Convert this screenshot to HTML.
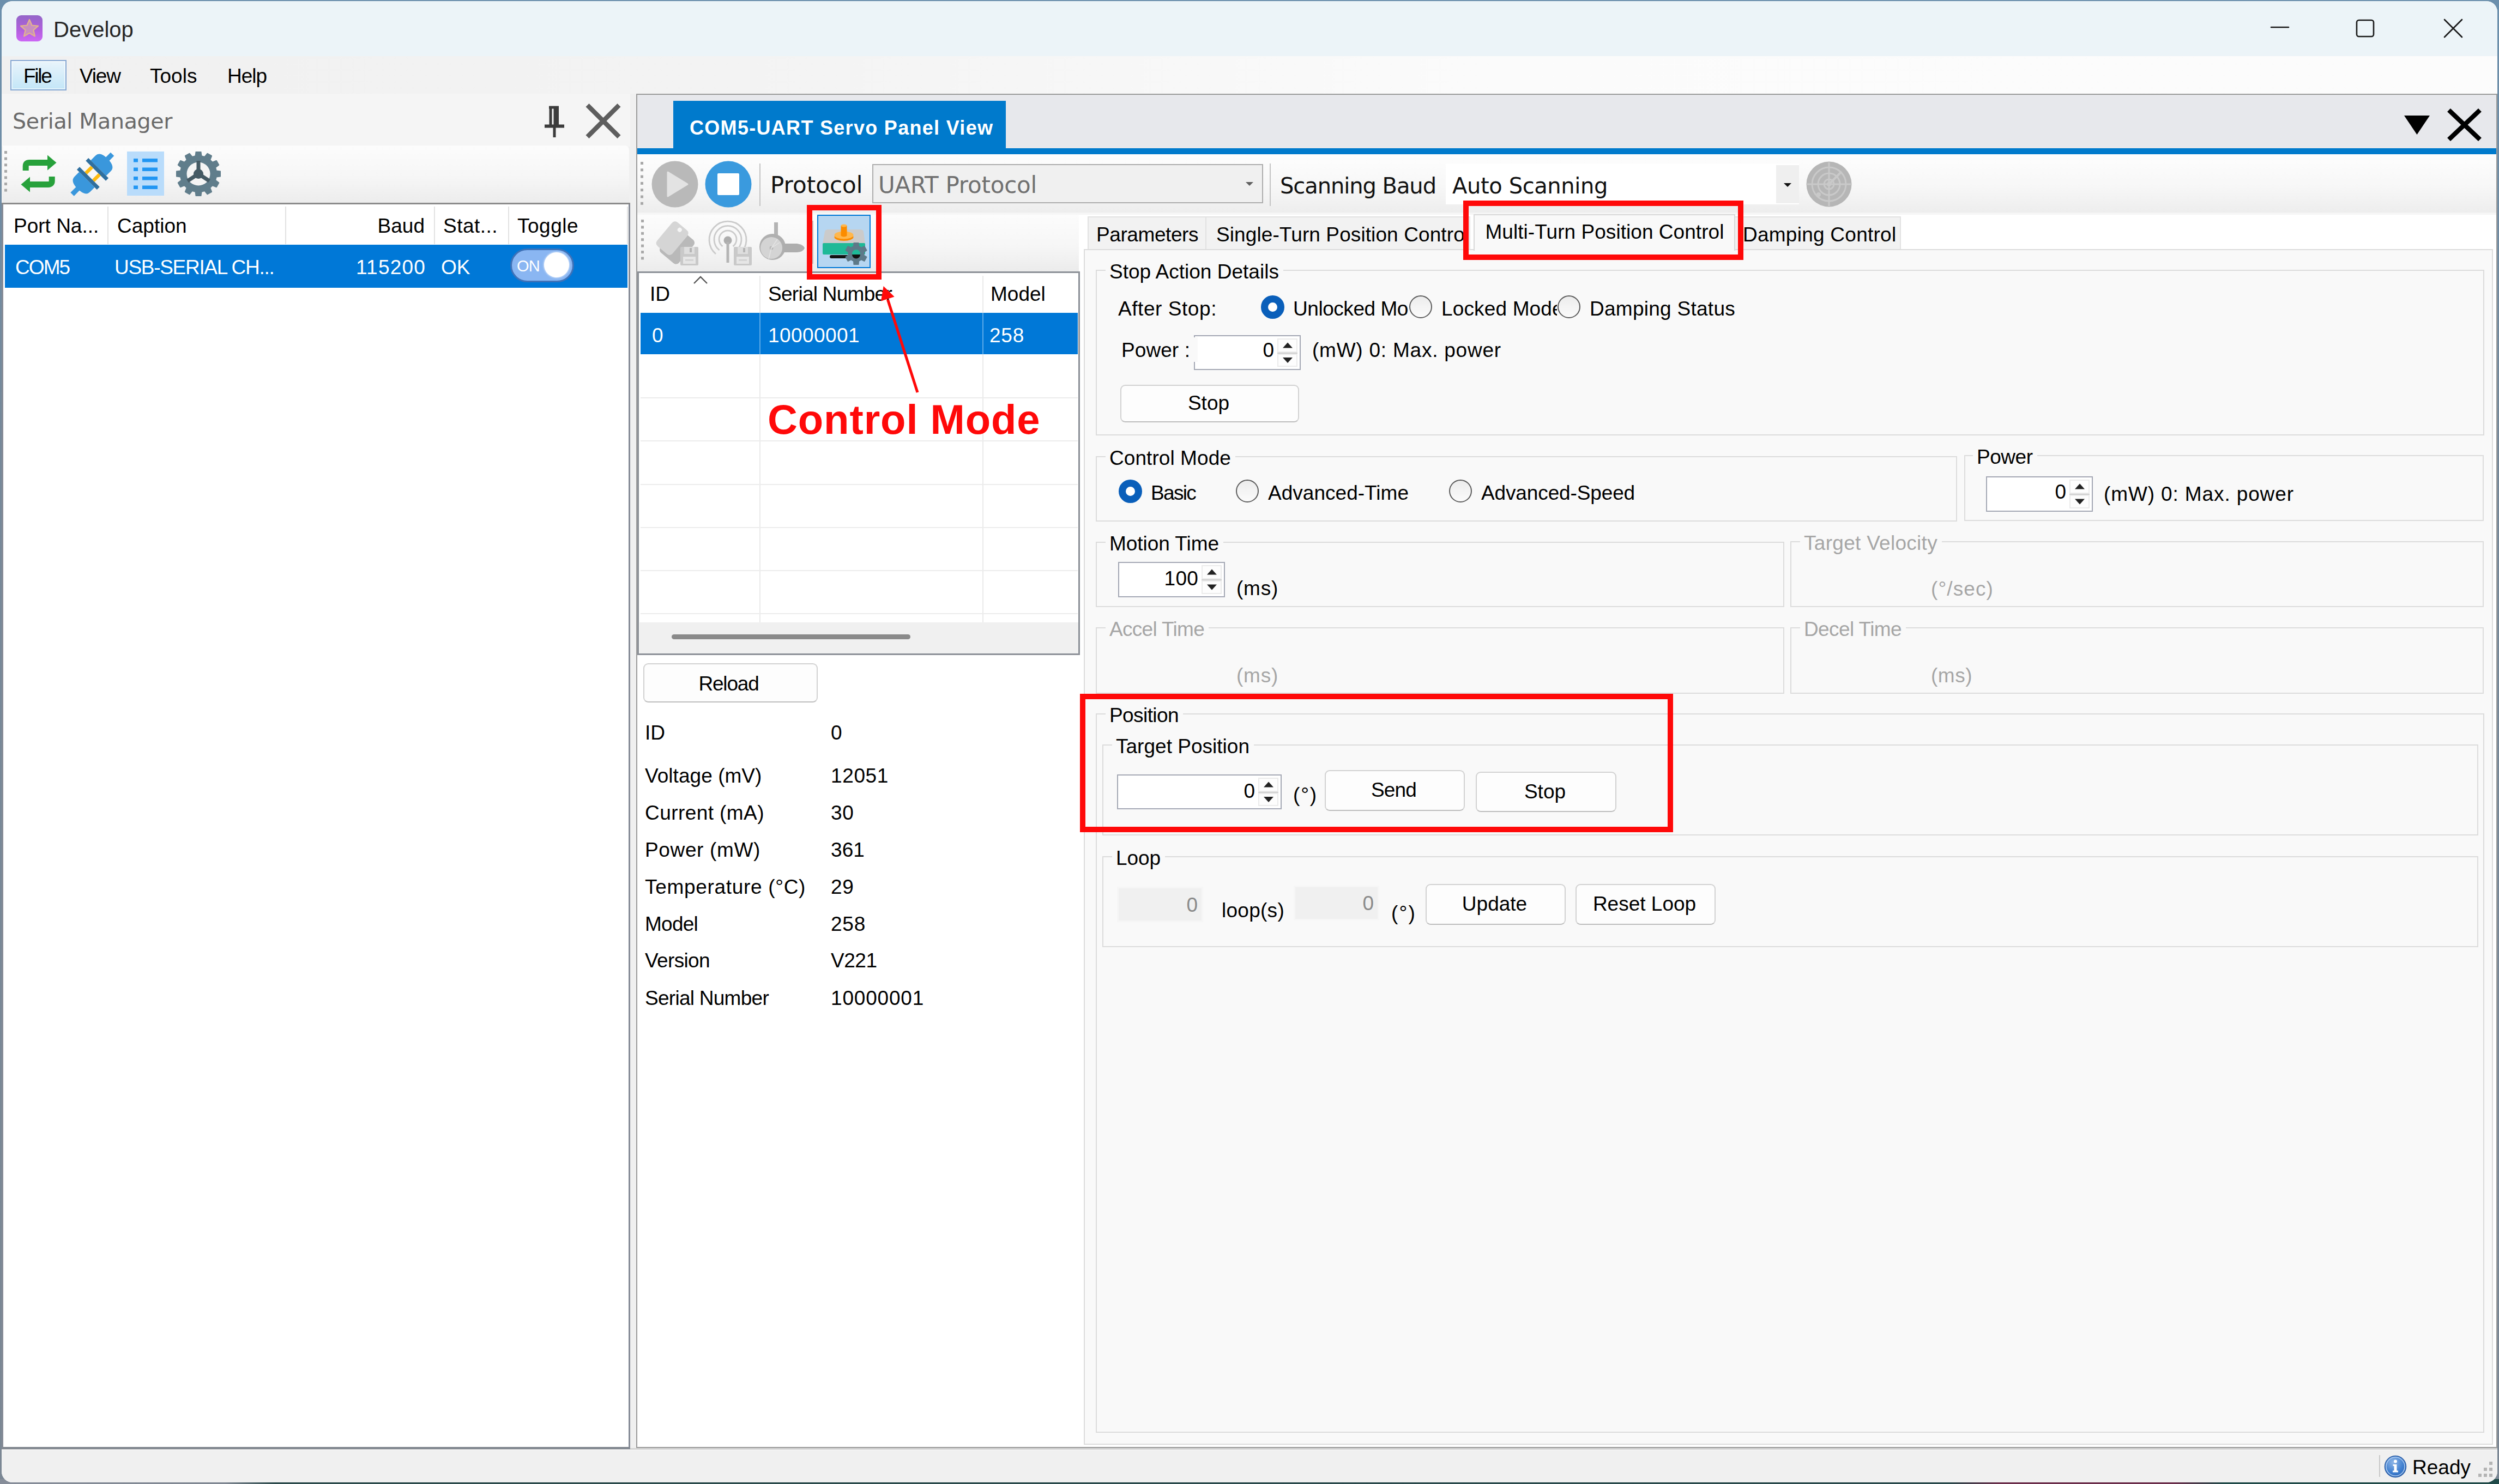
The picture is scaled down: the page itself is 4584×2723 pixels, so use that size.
<!DOCTYPE html>
<html lang="en"><head><meta charset="utf-8"><title>Develop</title><style>
html,body{margin:0;padding:0}
body{width:4584px;height:2723px;position:relative;overflow:hidden;background:linear-gradient(#6b8fac,#76899a 30%,#7b8794);font-family:"Liberation Sans",sans-serif;}
.a{position:absolute;box-sizing:border-box}
.t{position:absolute;white-space:nowrap;line-height:1}
.btn{position:absolute;box-sizing:border-box;border:2px solid #d2d2d2;border-bottom-color:#bdbdbd;border-radius:9px;background:#fdfdfd;font-size:37px;text-align:center;white-space:nowrap}
.gb{position:absolute;box-sizing:border-box;border:2px solid #dcdcdc}
</style></head><body>
<div class="a" style="left:0px;top:2714px;width:4584px;height:9px;background:linear-gradient(to right,#868d99 0%,#7f8792 9%,#2b4a4b 11%,#27484a 78%,#6b2d4a 80%,#6b2d4a 87%,#1f4a48 89%,#1f4a48 100%);"></div>
<div class="a" style="left:3px;top:2px;width:4578px;height:2718px;border-radius:20px 20px 20px 20px;overflow:hidden;background:#f0f0f0;">
<div class="a" style="left:-3px;top:-2px;width:4584px;height:2723px;">
<div class="a" style="left:0px;top:0px;width:4584px;height:103px;background:#ecf4f8;"></div>
<svg class="a" style="left:29px;top:27px;" width="50" height="50" viewBox="0 0 50 50"><defs><linearGradient id="ig" x1="0" y1="0" x2="0" y2="1"><stop offset="0" stop-color="#9466c8"/><stop offset="0.55" stop-color="#b05fdc"/><stop offset="1" stop-color="#cc66f5"/></linearGradient></defs>
<rect x="1" y="1" width="48" height="48" rx="9" fill="url(#ig)"/>
<path d="M25 9 L29.6 19.5 L41 20.6 L32.4 28.3 L35 39.5 L25 33.6 L15 39.5 L17.6 28.3 L9 20.6 L20.4 19.5 Z" fill="#c98fc0" stroke="#e2b48c" stroke-width="2.2" stroke-linejoin="round"/></svg>
<span class="t" style="top:33.6px;font-size:40px;color:#262626;left:98px;">Develop</span>
<svg class="a" style="left:4150px;top:20px;" width="400" height="70" viewBox="0 0 400 70"><g stroke="#1a1a1a" stroke-width="2.6" fill="none" stroke-linecap="round">
<path d="M16 30 H48"/>
<rect x="173" y="17" width="31" height="30" rx="4"/>
<path d="M334 16 L366 48 M366 16 L334 48"/></g></svg>
<div class="a" style="left:0px;top:103px;width:4584px;height:69px;background:linear-gradient(to right,#f0f0f0 0%,#f3f3f3 30%,#fbfbfb 60%,#fcfcfc 100%);"></div>
<div class="a" style="left:19px;top:110px;width:103px;height:56px;border:2px solid #86a8d3;background:linear-gradient(#e9f4fb,#c3e6f7);box-shadow:inset 0 0 0 2px rgba(255,255,255,.55);"></div>
<span class="t" style="top:120.7px;font-size:37px;color:#000;letter-spacing:-2.3px;left:43px;">File</span>
<span class="t" style="top:120.7px;font-size:37px;color:#000;letter-spacing:-1.2px;left:146px;">View</span>
<span class="t" style="top:120.7px;font-size:37px;color:#000;left:275px;">Tools</span>
<span class="t" style="top:120.7px;font-size:37px;color:#000;letter-spacing:-1px;left:417px;">Help</span>
<div class="a" style="left:0px;top:2654px;width:4584px;height:3px;background:#a6a6a6;"></div>
<div class="a" style="left:0px;top:2657px;width:4584px;height:3px;background:#d4d4d4;"></div>
<div class="a" style="left:0px;top:2660px;width:4584px;height:62px;background:#f0f0f0;border-top:1px solid #fafafa;"></div>
<div class="a" style="left:4364px;top:2670px;width:2px;height:40px;background:#c8c8c8;"></div>
<svg class="a" style="left:4373px;top:2670px;" width="42" height="42" viewBox="0 0 42 42"><defs><radialGradient id="inf" cx="0.4" cy="0.3" r="0.8"><stop offset="0" stop-color="#8fb6e6"/><stop offset="0.6" stop-color="#3f7fd0"/><stop offset="1" stop-color="#2a62b0"/></radialGradient></defs>
<circle cx="21" cy="21" r="19.5" fill="url(#inf)" stroke="#2f5fa5" stroke-width="1.5"/>
<circle cx="21" cy="21" r="17" fill="none" stroke="#a9c8ee" stroke-width="1.6"/>
<circle cx="21" cy="11.5" r="3" fill="#fff"/><path d="M16.5 17 H23.5 V28.5 H26 V31.5 H16 V28.5 H18.5 V20 H16.5 Z" fill="#fff"/></svg>
<span class="t" style="top:2673.7px;font-size:37px;color:#000;left:4425px;">Ready</span>
<svg class="a" style="left:4540px;top:2676px;" width="42" height="46" viewBox="0 0 42 46"><g fill="#b4b4b4"><rect x="26" y="6" width="6" height="6"/><rect x="16" y="17" width="6" height="6"/><rect x="26" y="17" width="6" height="6"/><rect x="6" y="28" width="6" height="6"/><rect x="16" y="28" width="6" height="6"/><rect x="26" y="28" width="6" height="6"/></g></svg>
<div class="a" style="left:3px;top:172px;width:1153px;height:97px;background:#f5f5f5;"></div>
<div class="a" style="left:1156px;top:172px;width:11px;height:2485px;background:#f0f0f0;"></div>
<span class="t" style="top:203.1px;font-size:39.5px;color:#6a6a6a;font-family:'DejaVu Sans','Liberation Sans',sans-serif;letter-spacing:-0.3px;left:23px;">Serial Manager</span>
<svg class="a" style="left:990px;top:188px;" width="60" height="70" viewBox="0 0 60 70"><g fill="none" stroke="#3c3c3c" stroke-width="5"><path d="M17 9 H35 M20 9 V42 M32.5 9 V42" /><path d="M29 9 V42" stroke-width="7"/><path d="M9 43.5 H45" stroke-width="6"/><path d="M27 45 V64" stroke-width="5"/></g></svg>
<svg class="a" style="left:1070px;top:186px;" width="72" height="72" viewBox="0 0 72 72"><path d="M7.5 7 L65.5 65 M65.5 7 L7.5 65" stroke="#5e5e5e" stroke-width="8.5" fill="none"/></svg>
<div class="a" style="left:5px;top:267px;width:1149px;height:106px;background:linear-gradient(#fcfcfc,#f6f6f6 55%,#ececec);border-radius:0 8px 0 0;"></div>
<div class="a" style="left:3px;top:372px;width:1153px;height:3px;background:#8c8c8c;"></div>
<svg class="a" style="left:6px;top:274px;" width="10" height="80" viewBox="0 0 10 80"><rect x="2" y="3.0" width="5" height="5" fill="#a8a8a8"/><rect x="2" y="14.6" width="5" height="5" fill="#a8a8a8"/><rect x="2" y="26.2" width="5" height="5" fill="#a8a8a8"/><rect x="2" y="37.8" width="5" height="5" fill="#a8a8a8"/><rect x="2" y="49.4" width="5" height="5" fill="#a8a8a8"/><rect x="2" y="61.0" width="5" height="5" fill="#a8a8a8"/><rect x="2" y="72.6" width="5" height="5" fill="#a8a8a8"/></svg>
<svg class="a" style="left:36px;top:282px;" width="70" height="72" viewBox="0 0 70 72"><g fill="none" stroke="#27a13b" stroke-width="11" stroke-linejoin="round"><path d="M11.2 31 V23 Q11.2 16.4 18 16.4 H52"/><path d="M59.2 42 V50 Q59.2 56.4 52.5 56.4 H18"/></g>
<path d="M51 2.5 L67.5 16.4 L51 30.5 Z" fill="#27a13b"/><path d="M19 42.5 L2.5 56.4 L19 70.5 Z" fill="#27a13b"/></svg>
<svg class="a" style="left:124px;top:274px;" width="92" height="90" viewBox="0 0 92 90"><g transform="rotate(45 46 45)">
<rect x="41.5" y="-6" width="9" height="16" fill="#3a97dc"/>
<path d="M26 30 V18 Q26 6 46 6 Q66 6 66 18 V30 Z" fill="#3a97dc"/>
<rect x="20" y="30" width="52" height="7" fill="#2f6f9f"/>
<rect x="33" y="37" width="6.5" height="16" fill="#fdbb11"/><rect x="52.5" y="37" width="6.5" height="16" fill="#fdbb11"/>
<rect x="20" y="53" width="52" height="7" fill="#2f6f9f"/>
<path d="M26 60 V72 Q26 84 46 84 Q66 84 66 72 V60 Z" fill="#3a97dc"/>
<rect x="41.5" y="82" width="9" height="16" fill="#3a97dc"/>
</g></svg>
<div class="a" style="left:233px;top:278px;width:68px;height:81px;background:#b9dcfb;"></div>
<svg class="a" style="left:233px;top:278px;" width="68" height="81" viewBox="0 0 68 81"><rect x="12" y="13.0" width="8" height="6.5" fill="#2196f3"/><rect x="28" y="13.0" width="28" height="6.5" fill="#2196f3"/><rect x="12" y="29.5" width="8" height="6.5" fill="#2196f3"/><rect x="28" y="29.5" width="28" height="6.5" fill="#2196f3"/><rect x="12" y="46.0" width="8" height="6.5" fill="#2196f3"/><rect x="28" y="46.0" width="28" height="6.5" fill="#2196f3"/><rect x="12" y="62.5" width="8" height="6.5" fill="#2196f3"/><rect x="28" y="62.5" width="28" height="6.5" fill="#2196f3"/></svg>
<svg class="a" style="left:323px;top:278px;" width="82" height="82" viewBox="0 0 82 82"><path d="M35.7 8.4 L36.8 0.7 L45.2 0.7 L46.3 8.4 L52.7 10.1 L57.5 4.0 L64.8 8.2 L61.9 15.5 L66.5 20.1 L73.8 17.2 L78.0 24.5 L71.9 29.3 L73.6 35.7 L81.3 36.8 L81.3 45.2 L73.6 46.3 L71.9 52.7 L78.0 57.5 L73.8 64.8 L66.5 61.9 L61.9 66.5 L64.8 73.8 L57.5 78.0 L52.7 71.9 L46.3 73.6 L45.2 81.3 L36.8 81.3 L35.7 73.6 L29.3 71.9 L24.5 78.0 L17.2 73.8 L20.1 66.5 L15.5 61.9 L8.2 64.8 L4.0 57.5 L10.1 52.7 L8.4 46.3 L0.7 45.2 L0.7 36.8 L8.4 35.7 L10.1 29.3 L4.0 24.5 L8.2 17.2 L15.5 20.1 L20.1 15.5 L17.2 8.2 L24.5 4.0 L29.3 10.1 Z" fill="#607d8b" stroke="#607d8b" stroke-width="2.5" stroke-linejoin="round"/><circle cx="41" cy="41" r="33.5" fill="#607d8b"/><circle cx="41" cy="41" r="21.5" fill="#f4f4f4"/>
<g stroke="#455a64" stroke-width="7"><path d="M41 41 V17"/><path d="M41 41 L21 54"/><path d="M41 41 L61 54"/></g><circle cx="41" cy="41" r="9" fill="#455a64"/>
<path d="M41 27 L53 48 H29 Z" fill="#455a64"/></svg>
<div class="a" style="left:3px;top:375px;width:1153px;height:2284px;background:#fff;border:3px solid #868c97;border-top:none;border-bottom:4px solid #80868f;"></div>
<div class="a" style="left:197px;top:379px;width:2px;height:69px;background:#e2e2e2;"></div>
<div class="a" style="left:523px;top:379px;width:2px;height:69px;background:#e2e2e2;"></div>
<div class="a" style="left:796px;top:379px;width:2px;height:69px;background:#e2e2e2;"></div>
<div class="a" style="left:932px;top:379px;width:2px;height:69px;background:#e2e2e2;"></div>
<div class="a" style="left:1150px;top:379px;width:2px;height:69px;background:#e2e2e2;"></div>
<span class="t" style="top:395.7px;font-size:37px;color:#000;left:25px;">Port Na...</span>
<span class="t" style="top:395.7px;font-size:37px;color:#000;left:215px;">Caption</span>
<span class="t" style="top:395.7px;font-size:37px;color:#000;right:3805px;">Baud</span>
<span class="t" style="top:395.7px;font-size:37px;color:#000;letter-spacing:0.48px;left:813px;">Stat...</span>
<span class="t" style="top:395.7px;font-size:37px;color:#000;letter-spacing:0.49px;left:949px;">Toggle</span>
<div class="a" style="left:9px;top:449px;width:1142px;height:79px;background:#0078d7;"></div>
<span class="t" style="top:471.7px;font-size:37px;color:#fff;letter-spacing:-1.9px;left:28px;">COM5</span>
<span class="t" style="top:471.7px;font-size:37px;color:#fff;letter-spacing:-1.3px;left:210px;">USB-SERIAL CH...</span>
<span class="t" style="top:471.7px;font-size:37px;color:#fff;letter-spacing:1.2px;right:3803px;">115200</span>
<span class="t" style="top:471.7px;font-size:37px;color:#fff;left:809px;">OK</span>
<div class="a" style="left:936px;top:456px;width:117px;height:62px;border-radius:31px;background:#8ab6f2;border:3px solid #3f72b8;"></div>
<div class="a" style="left:998px;top:463px;width:46px;height:46px;border-radius:50%;background:#fff;box-shadow:0 0 3px 1px rgba(255,255,255,.6);"></div>
<span class="t" style="top:473.5px;font-size:29px;color:#fff;letter-spacing:-0.75px;left:948px;">ON</span>
<div class="a" style="left:1167px;top:172px;width:3414px;height:2485px;background:#fff;border:2px solid #9b9b9b;"></div>
<div class="a" style="left:1169px;top:174px;width:3410px;height:98px;background:#e7e8ec;"></div>
<div class="a" style="left:1235px;top:185px;width:610px;height:90px;background:#007acc;"></div>
<div class="a" style="left:1169px;top:272px;width:3410px;height:11px;background:#007acc;"></div>
<span class="t" style="top:216.5px;font-size:36px;color:#fff;font-weight:700;letter-spacing:1.3px;left:1265px;">COM5-UART Servo Panel View</span>
<svg class="a" style="left:4400px;top:195px;" width="170" height="75" viewBox="0 0 170 75"><path d="M10 17 H57 L33.5 52 Z" fill="#000"/><path d="M92 7 L149 61 M149 7 L92 61" stroke="#000" stroke-width="8.5" fill="none"/></svg>
<div class="a" style="left:1169px;top:283px;width:3410px;height:107px;background:linear-gradient(#fdfdfd,#f7f7f7 55%,#ededed);"></div>
<div class="a" style="left:1169px;top:390px;width:3410px;height:4px;background:#f6f6f6;"></div>
<svg class="a" style="left:1173px;top:294px;" width="10" height="86" viewBox="0 0 10 86"><rect x="2" y="3.0" width="5" height="5" fill="#a8a8a8"/><rect x="2" y="15.3" width="5" height="5" fill="#a8a8a8"/><rect x="2" y="27.6" width="5" height="5" fill="#a8a8a8"/><rect x="2" y="39.9" width="5" height="5" fill="#a8a8a8"/><rect x="2" y="52.2" width="5" height="5" fill="#a8a8a8"/><rect x="2" y="64.5" width="5" height="5" fill="#a8a8a8"/><rect x="2" y="76.8" width="5" height="5" fill="#a8a8a8"/></svg>
<svg class="a" style="left:1194px;top:294px;" width="88" height="88" viewBox="0 0 88 88"><circle cx="44" cy="44" r="42.5" fill="#b9b9b9"/><path d="M31 22 L67 44 L31 66 Z" fill="#e3e3e3" stroke="#e3e3e3" stroke-width="3" stroke-linejoin="round"/></svg>
<svg class="a" style="left:1292px;top:294px;" width="88" height="88" viewBox="0 0 88 88"><circle cx="44" cy="44" r="42.5" fill="#3a9ade"/><rect x="24" y="24" width="40" height="40" rx="2" fill="#fff"/></svg>
<div class="a" style="left:1393px;top:300px;width:2px;height:78px;background:#c4c4c4;"></div>
<span class="t" style="top:318.9px;font-size:42px;color:#111;font-family:'DejaVu Sans','Liberation Sans',sans-serif;letter-spacing:0.03px;left:1413px;">Protocol</span>
<div class="a" style="left:1600px;top:301px;width:717px;height:72px;background:#f0f0f0;border:2px solid #adadad;"></div>
<span class="t" style="top:318.9px;font-size:42px;color:#707070;font-family:'DejaVu Sans','Liberation Sans',sans-serif;letter-spacing:-0.22px;left:1611px;">UART Protocol</span>
<svg class="a" style="left:2281px;top:331px;" width="22" height="14" viewBox="0 0 22 14"><path d="M4 3 H18 L11 10 Z" fill="#606060"/></svg>
<div class="a" style="left:2329px;top:300px;width:2px;height:78px;background:#c4c4c4;"></div>
<span class="t" style="top:320.6px;font-size:40px;color:#111;font-family:'DejaVu Sans','Liberation Sans',sans-serif;letter-spacing:-1.07px;left:2348px;">Scanning Baud</span>
<div class="a" style="left:2652px;top:300px;width:648px;height:75px;background:#fff;"></div>
<div class="a" style="left:3258px;top:303px;width:42px;height:70px;background:#efefef;"></div>
<span class="t" style="top:320.6px;font-size:40px;color:#111;font-family:'DejaVu Sans','Liberation Sans',sans-serif;letter-spacing:-0.39px;left:2664px;">Auto Scanning</span>
<svg class="a" style="left:3268px;top:333px;" width="22" height="14" viewBox="0 0 22 14"><path d="M4 3 H18 L11 10 Z" fill="#111"/></svg>
<svg class="a" style="left:3312px;top:295px;" width="86" height="86" viewBox="0 0 86 86"><circle cx="43" cy="43" r="41.5" fill="#b6b6b6"/>
<g fill="none" stroke="#c9c9c9" stroke-width="3"><circle cx="43" cy="43" r="31"/><circle cx="43" cy="43" r="20"/><circle cx="43" cy="43" r="9"/><path d="M43 3 V83 M3 43 H83"/><path d="M43 43 L66 20" stroke-width="4"/></g><circle cx="43" cy="43" r="4" fill="#c9c9c9"/><circle cx="24" cy="62" r="4" fill="#c9c9c9"/></svg>
<div class="a" style="left:1169px;top:394px;width:810px;height:105px;background:linear-gradient(#fcfcfc,#f6f6f6 55%,#ebebeb);"></div>
<svg class="a" style="left:1174px;top:400px;" width="10" height="80" viewBox="0 0 10 80"><rect x="2" y="3.0" width="5" height="5" fill="#a8a8a8"/><rect x="2" y="14.4" width="5" height="5" fill="#a8a8a8"/><rect x="2" y="25.8" width="5" height="5" fill="#a8a8a8"/><rect x="2" y="37.2" width="5" height="5" fill="#a8a8a8"/><rect x="2" y="48.6" width="5" height="5" fill="#a8a8a8"/><rect x="2" y="60.0" width="5" height="5" fill="#a8a8a8"/><rect x="2" y="71.4" width="5" height="5" fill="#a8a8a8"/></svg>
<svg class="a" style="left:1203px;top:405px;" width="82" height="84" viewBox="0 0 82 84"><g transform="translate(7 0) rotate(40 30 40)"><rect x="14" y="16" width="44" height="56" rx="7" fill="#b9b9b9"/></g>
<g transform="rotate(40 30 30)"><path d="M13 12 Q13 3 21 3 H42 Q50 3 50 12 V52 Q50 60 42 60 H21 Q13 60 13 52 Z" fill="#d5d5d5"/><circle cx="32" cy="11" r="4" fill="#f6f6f6"/></g>
<rect x="45" y="48" width="33" height="34" rx="2" fill="#c9c9c9"/><rect x="52" y="48" width="19" height="13" fill="#dedede"/><rect x="62" y="50" width="4" height="8" fill="#b5b5b5"/><rect x="50" y="66" width="23" height="13" fill="#e6e6e6"/><rect x="54" y="71" width="15" height="2.5" fill="#cfcfcf"/></svg>
<svg class="a" style="left:1295px;top:404px;" width="84" height="88" viewBox="0 0 84 88"><g fill="none" stroke="#cbcbcb" stroke-width="2.8"><path d="M18 62 A34 34 0 1 1 62 62" /><path d="M24.5 55 A25 25 0 1 1 55.5 55"/><path d="M30.5 48 A16 16 0 1 1 49.5 48"/></g>
<circle cx="40" cy="37" r="7.5" fill="#adadad"/><rect x="37.5" y="40" width="5" height="38" fill="#b5b5b5"/>
<rect x="51" y="49" width="33" height="34" rx="2" fill="#c9c9c9"/><rect x="58" y="49" width="19" height="13" fill="#dedede"/><rect x="68" y="51" width="4" height="8" fill="#b5b5b5"/><rect x="56" y="67" width="23" height="13" fill="#e6e6e6"/><rect x="60" y="72" width="15" height="2.5" fill="#cfcfcf"/></svg>
<svg class="a" style="left:1390px;top:405px;" width="90" height="80" viewBox="0 0 90 80"><rect x="30" y="3" width="7" height="26" fill="#b4b4b4"/>
<circle cx="27" cy="48" r="24" fill="#b0b0b0"/><circle cx="25" cy="50" r="20" fill="#d4d4d4"/><circle cx="25" cy="50" r="3.5" fill="#b8b8b8"/>
<path d="M25 50 L36 34 M25 50 L40 40 M25 50 L20 70" stroke="#e4e4e4" stroke-width="1.5"/>
<path d="M46 42 H72 Q84 44 86 50 Q84 57 72 58 H46 Z" fill="#aeaeae"/></svg>
<div class="a" style="left:1490px;top:405px;width:2px;height:79px;background:#c4c4c4;"></div>
<div class="a" style="left:1499px;top:394px;width:98px;height:98px;background:#b6d6f1;border:2px solid #0078d7;"></div>
<svg class="a" style="left:1499px;top:394px;" width="98" height="98" viewBox="0 0 98 98"><path d="M20 27 H79 Q84 27 85 31 L88 53 H10 L14 31 Q15 27 20 27 Z" fill="#cbcbcb"/><rect x="10" y="52" width="78" height="21" rx="2" fill="#1eb997"/>
<rect x="23" y="74" width="36" height="6" rx="3" fill="#111"/>
<ellipse cx="49" cy="41" rx="17.5" ry="7" fill="#fb8c00"/><ellipse cx="49" cy="37.5" rx="17.5" ry="7" fill="#ffb74d"/>
<rect x="43.5" y="20" width="11" height="18" fill="#fb8c00"/><ellipse cx="49" cy="20" rx="5.5" ry="2.5" fill="#ffb74d"/><ellipse cx="49" cy="38" rx="5.5" ry="2.5" fill="#fb8c00"/>
<g transform="translate(71.5 71.5)"><path d="M-4.5 -13.3 L-4.1 -19.6 L4.1 -19.6 L4.5 -13.3 L9.3 -10.5 L14.9 -13.4 L19.0 -6.2 L13.7 -2.8 L13.7 2.8 L19.0 6.2 L14.9 13.4 L9.3 10.5 L4.5 13.3 L4.1 19.6 L-4.1 19.6 L-4.5 13.3 L-9.3 10.5 L-14.9 13.4 L-19.0 6.2 L-13.7 2.8 L-13.7 -2.8 L-19.0 -6.2 L-14.9 -13.4 L-9.3 -10.5 Z" fill="#5d7988" stroke="#5d7988" stroke-width="2" stroke-linejoin="round"/><circle r="15" fill="#5d7988"/><circle r="7.5" fill="#1eb997"/><path d="M-7.5 1.5 A7.5 7.5 0 0 0 7.5 1.5 Z" fill="#111"/></g></svg>
<div class="a" style="left:1169px;top:498px;width:812px;height:704px;background:#fff;border:3px solid #8c9097;"></div>
<div class="a" style="left:1393px;top:506px;width:2px;height:636px;background:#eaeaea;"></div>
<div class="a" style="left:1802px;top:506px;width:2px;height:636px;background:#eaeaea;"></div>
<div class="a" style="left:1175px;top:729px;width:802px;height:2px;background:#ececec;"></div>
<div class="a" style="left:1175px;top:808px;width:802px;height:2px;background:#ececec;"></div>
<div class="a" style="left:1175px;top:888px;width:802px;height:2px;background:#ececec;"></div>
<div class="a" style="left:1175px;top:967px;width:802px;height:2px;background:#ececec;"></div>
<div class="a" style="left:1175px;top:1046px;width:802px;height:2px;background:#ececec;"></div>
<div class="a" style="left:1175px;top:1125px;width:802px;height:2px;background:#ececec;"></div>
<svg class="a" style="left:1268px;top:503px;" width="34" height="20" viewBox="0 0 34 20"><path d="M5 17 L17 5 L29 17" fill="none" stroke="#555" stroke-width="2.4"/></svg>
<span class="t" style="top:520.7px;font-size:37px;color:#000;left:1192px;">ID</span>
<span class="t" style="top:520.7px;font-size:37px;color:#000;letter-spacing:-0.73px;left:1409px;">Serial Number</span>
<span class="t" style="top:520.7px;font-size:37px;color:#000;left:1817px;">Model</span>
<div class="a" style="left:1175px;top:574px;width:802px;height:76px;background:#0078d7;"></div>
<div class="a" style="left:1393px;top:574px;width:2px;height:76px;background:#5aa9e8;"></div>
<div class="a" style="left:1802px;top:574px;width:2px;height:76px;background:#5aa9e8;"></div>
<span class="t" style="top:596.7px;font-size:37px;color:#fff;left:1196px;">0</span>
<span class="t" style="top:596.7px;font-size:37px;color:#fff;letter-spacing:0.42px;left:1409px;">10000001</span>
<span class="t" style="top:596.7px;font-size:37px;color:#fff;letter-spacing:0.76px;left:1815px;">258</span>
<div class="a" style="left:1173px;top:1142px;width:805px;height:57px;background:#f0f0f0;"></div>
<div class="a" style="left:1232px;top:1164px;width:438px;height:9px;background:#8a8a8a;border-radius:5px;"></div>
<div class="btn" style="left:1180px;top:1217px;width:320px;height:72px;line-height:71px;letter-spacing:-1.2px;padding-right:7px">Reload</div>
<span class="t" style="top:1326.2px;font-size:37px;color:#000;letter-spacing:-0.15px;left:1183px;">ID</span>
<span class="t" style="top:1326.2px;font-size:37px;color:#000;left:1524px;">0</span>
<span class="t" style="top:1404.7px;font-size:37px;color:#000;letter-spacing:0.05px;left:1183px;">Voltage (mV)</span>
<span class="t" style="top:1404.7px;font-size:37px;color:#000;letter-spacing:0.62px;left:1524px;">12051</span>
<span class="t" style="top:1472.7px;font-size:37px;color:#000;letter-spacing:0.43px;left:1183px;">Current (mA)</span>
<span class="t" style="top:1472.7px;font-size:37px;color:#000;letter-spacing:0.72px;left:1524px;">30</span>
<span class="t" style="top:1540.7px;font-size:37px;color:#000;letter-spacing:0.64px;left:1183px;">Power (mW)</span>
<span class="t" style="top:1540.7px;font-size:37px;color:#000;letter-spacing:0.09px;left:1524px;">361</span>
<span class="t" style="top:1608.7px;font-size:37px;color:#000;letter-spacing:0.68px;left:1183px;">Temperature (°C)</span>
<span class="t" style="top:1608.7px;font-size:37px;color:#000;letter-spacing:0.72px;left:1524px;">29</span>
<span class="t" style="top:1676.7px;font-size:37px;color:#000;letter-spacing:-0.76px;left:1183px;">Model</span>
<span class="t" style="top:1676.7px;font-size:37px;color:#000;letter-spacing:0.76px;left:1524px;">258</span>
<span class="t" style="top:1744.2px;font-size:37px;color:#000;letter-spacing:-0.63px;left:1183px;">Version</span>
<span class="t" style="top:1744.2px;font-size:37px;color:#000;letter-spacing:-0.45px;left:1524px;">V221</span>
<span class="t" style="top:1812.7px;font-size:37px;color:#000;letter-spacing:-0.73px;left:1183px;">Serial Number</span>
<span class="t" style="top:1812.7px;font-size:37px;color:#000;letter-spacing:0.8px;left:1524px;">10000001</span>
<div class="a" style="left:1988px;top:457px;width:2585px;height:2194px;background:#f9f9f9;border:2px solid #dcdcdc;"></div>
<div class="a" style="left:1995px;top:397px;width:218px;height:60px;background:#f2f2f2;border:2px solid #e2e2e2;border-bottom:none;"></div>
<span class="t" style="top:411.7px;font-size:37px;color:#000;letter-spacing:-0.42px;left:2011px;">Parameters</span>
<div class="a" style="left:2211px;top:397px;width:486px;height:60px;overflow:hidden;background:#f2f2f2;border:2px solid #e2e2e2;border-bottom:none;"></div>
<div class="a" style="left:2211px;top:397px;width:480px;height:60px;overflow:hidden;"><span class="t" style="left:20px;top:14.7px;font-size:37px;letter-spacing:0.1px">Single-Turn Position Control</span></div>
<div class="a" style="left:3180px;top:397px;width:307px;height:60px;background:#f2f2f2;border:2px solid #e2e2e2;border-bottom:none;"></div>
<span class="t" style="top:411.7px;font-size:37px;color:#000;letter-spacing:0.25px;left:3197px;">Damping Control</span>
<div class="a" style="left:2703px;top:393px;width:480px;height:67px;background:#f9f9f9;border:2px solid #d9d9d9;border-bottom:none;"></div>
<span class="t" style="top:406.7px;font-size:37px;color:#000;letter-spacing:0.05px;left:2724.5px;">Multi-Turn Position Control</span>
<div class="gb" style="left:2010px;top:495px;width:2547px;height:304px;"></div>
<span class="t" style="left:2028px;top:479.7px;font-size:37px;color:#000;background:#f9f9f9;padding:0 8px 0 7px;letter-spacing:0.02px">Stop Action Details</span>
<span class="t" style="top:547.7px;font-size:37px;color:#000;letter-spacing:0.56px;left:2051px;">After Stop:</span>
<div class="a" style="left:2312.5px;top:541.5px;width:43px;height:43px;border-radius:50%;background:#fff;border:13px solid #0a5fba;"></div>
<div class="a" style="left:2372px;top:540px;width:212px;height:50px;overflow:hidden;"><span class="t" style="left:0;top:7.7px;font-size:37px;letter-spacing:-0.45px">Unlocked Mode</span></div>
<div class="a" style="left:2585px;top:542px;width:42px;height:42px;border-radius:50%;background:linear-gradient(#ececec,#fbfbfb);border:2px solid #5c5c5c;"></div>
<div class="a" style="left:2644px;top:540px;width:212px;height:50px;overflow:hidden;"><span class="t" style="left:0;top:7.7px;font-size:37px;letter-spacing:0.15px">Locked Mode</span></div>
<div class="a" style="left:2857px;top:542px;width:42px;height:42px;border-radius:50%;background:linear-gradient(#ececec,#fbfbfb);border:2px solid #5c5c5c;"></div>
<span class="t" style="top:547.7px;font-size:37px;color:#000;letter-spacing:0.27px;left:2916px;">Damping Status</span>
<span class="t" style="top:623.7px;font-size:37px;color:#000;letter-spacing:0.08px;left:2057px;">Power :</span>
<div class="a" style="left:2190px;top:615px;width:196px;height:64px;background:#fff;border:2px solid #a4a8b4;"></div>
<div class="a" style="left:2343px;top:621px;width:37px;height:26px;border:2px solid #ebebeb;background:#fdfdfd;"></div>
<div class="a" style="left:2343px;top:649px;width:37px;height:24px;border:2px solid #ebebeb;background:#fdfdfd;"></div>
<div class="a" style="left:2343px;top:647px;width:37px;height:2px;background:#cfcfcf;"></div>
<svg class="a" style="left:2351px;top:621px;" width="22" height="52" viewBox="0 0 22 52"><path d="M11 7.5 L20 17.5 H2 Z" fill="#222"/><path d="M2 35.0 H20 L11 45.0 Z" fill="#222"/></svg>
<span class="t" style="top:623.7px;font-size:37px;color:#000;right:2247px;">0</span>
<div class="a" style="left:2186px;top:619px;width:11px;height:45px;background:#f9f9f9;"></div>
<span class="t" style="top:623.7px;font-size:37px;color:#000;letter-spacing:0.77px;left:2407px;">(mW) 0: Max. power</span>
<div class="btn" style="left:2055px;top:706px;width:328px;height:69px;line-height:64px;padding-right:4px">Stop</div>
<div class="gb" style="left:2010px;top:837px;width:1580px;height:120px;"></div>
<span class="t" style="left:2028px;top:821.7px;font-size:37px;color:#000;background:#f9f9f9;padding:0 8px 0 7px;letter-spacing:0.07px">Control Mode</span>
<div class="a" style="left:2051.5px;top:879.5px;width:43px;height:43px;border-radius:50%;background:#fff;border:13px solid #0a5fba;"></div>
<span class="t" style="top:885.7px;font-size:37px;color:#000;letter-spacing:-1.69px;left:2111px;">Basic</span>
<div class="a" style="left:2267px;top:880px;width:42px;height:42px;border-radius:50%;background:linear-gradient(#ececec,#fbfbfb);border:2px solid #5c5c5c;"></div>
<span class="t" style="top:885.7px;font-size:37px;color:#000;letter-spacing:0.02px;left:2326px;">Advanced-Time</span>
<div class="a" style="left:2658px;top:880px;width:42px;height:42px;border-radius:50%;background:linear-gradient(#ececec,#fbfbfb);border:2px solid #5c5c5c;"></div>
<span class="t" style="top:885.7px;font-size:37px;color:#000;letter-spacing:-0.13px;left:2717px;">Advanced-Speed</span>
<div class="gb" style="left:3603px;top:835px;width:953px;height:121px;"></div>
<span class="t" style="left:3619px;top:819.7px;font-size:37px;color:#000;background:#f9f9f9;padding:0 8px 0 7px;letter-spacing:-0.47px">Power</span>
<div class="a" style="left:3643px;top:874px;width:196px;height:65px;background:#fff;border:2px solid #a4a8b4;"></div>
<div class="a" style="left:3796px;top:880px;width:37px;height:26px;border:2px solid #ebebeb;background:#fdfdfd;"></div>
<div class="a" style="left:3796px;top:908px;width:37px;height:25px;border:2px solid #ebebeb;background:#fdfdfd;"></div>
<div class="a" style="left:3796px;top:906px;width:37px;height:2px;background:#cfcfcf;"></div>
<svg class="a" style="left:3804px;top:880px;" width="22" height="53" viewBox="0 0 22 53"><path d="M11 7.5 L20 17.5 H2 Z" fill="#222"/><path d="M2 35.5 H20 L11 45.5 Z" fill="#222"/></svg>
<span class="t" style="top:884.2px;font-size:37px;color:#000;right:794px;">0</span>
<span class="t" style="top:887.7px;font-size:37px;color:#000;letter-spacing:0.88px;left:3859px;">(mW) 0: Max. power</span>
<div class="gb" style="left:2010px;top:994px;width:1263px;height:120px;"></div>
<span class="t" style="left:2028px;top:978.7px;font-size:37px;color:#000;background:#f9f9f9;padding:0 8px 0 7px;letter-spacing:-0.05px">Motion Time</span>
<div class="a" style="left:2051px;top:1031px;width:196px;height:65px;background:#fff;border:2px solid #a4a8b4;"></div>
<div class="a" style="left:2204px;top:1037px;width:37px;height:26px;border:2px solid #ebebeb;background:#fdfdfd;"></div>
<div class="a" style="left:2204px;top:1065px;width:37px;height:25px;border:2px solid #ebebeb;background:#fdfdfd;"></div>
<div class="a" style="left:2204px;top:1063px;width:37px;height:2px;background:#cfcfcf;"></div>
<svg class="a" style="left:2212px;top:1037px;" width="22" height="53" viewBox="0 0 22 53"><path d="M11 7.5 L20 17.5 H2 Z" fill="#222"/><path d="M2 35.5 H20 L11 45.5 Z" fill="#222"/></svg>
<span class="t" style="top:1042.7px;font-size:37px;color:#000;letter-spacing:0.22px;right:2386px;">100</span>
<span class="t" style="top:1060.7px;font-size:37px;color:#000;letter-spacing:0.75px;left:2268px;">(ms)</span>
<div class="gb" style="left:3284px;top:993px;width:1272px;height:121px;"></div>
<span class="t" style="left:3302px;top:977.7px;font-size:37px;color:#a6a6a6;background:#f9f9f9;padding:0 8px 0 7px;letter-spacing:0.29px">Target Velocity</span>
<span class="t" style="top:1061.7px;font-size:37px;color:#a6a6a6;letter-spacing:1.1px;left:3542px;">(°/sec)</span>
<div class="gb" style="left:2010px;top:1151px;width:1263px;height:122px;"></div>
<span class="t" style="left:2028px;top:1135.7px;font-size:37px;color:#a6a6a6;background:#f9f9f9;padding:0 8px 0 7px;letter-spacing:-0.69px">Accel Time</span>
<span class="t" style="top:1220.7px;font-size:37px;color:#a6a6a6;letter-spacing:0.75px;left:2268px;">(ms)</span>
<div class="gb" style="left:3284px;top:1151px;width:1272px;height:122px;"></div>
<span class="t" style="left:3302px;top:1135.7px;font-size:37px;color:#a6a6a6;background:#f9f9f9;padding:0 8px 0 7px;letter-spacing:-0.6px">Decel Time</span>
<span class="t" style="top:1220.7px;font-size:37px;color:#a6a6a6;letter-spacing:0.5px;left:3542px;">(ms)</span>
<div class="gb" style="left:2010px;top:1309px;width:2547px;height:1320px;"></div>
<span class="t" style="left:2028px;top:1293.7px;font-size:37px;color:#000;background:#f9f9f9;padding:0 8px 0 7px;letter-spacing:-0.58px">Position</span>
<div class="gb" style="left:2022px;top:1366px;width:2524px;height:167px;"></div>
<span class="t" style="left:2040px;top:1350.7px;font-size:37px;color:#000;background:#f9f9f9;padding:0 8px 0 7px;letter-spacing:0.02px">Target Position</span>
<div class="a" style="left:2049px;top:1421px;width:302px;height:64px;background:#fff;border:2px solid #a4a8b4;"></div>
<div class="a" style="left:2308px;top:1427px;width:37px;height:26px;border:2px solid #ebebeb;background:#fdfdfd;"></div>
<div class="a" style="left:2308px;top:1455px;width:37px;height:24px;border:2px solid #ebebeb;background:#fdfdfd;"></div>
<div class="a" style="left:2308px;top:1453px;width:37px;height:2px;background:#cfcfcf;"></div>
<svg class="a" style="left:2316px;top:1427px;" width="22" height="52" viewBox="0 0 22 52"><path d="M11 7.5 L20 17.5 H2 Z" fill="#222"/><path d="M2 35.0 H20 L11 45.0 Z" fill="#222"/></svg>
<span class="t" style="top:1432.7px;font-size:37px;color:#000;right:2282px;">0</span>
<span class="t" style="top:1439.7px;font-size:37px;color:#000;letter-spacing:1.85px;left:2372px;">(°)</span>
<div class="btn" style="left:2430px;top:1413px;width:257px;height:75px;line-height:70px;padding-right:4px"><span style="letter-spacing:-0.8px">Send</span></div>
<div class="btn" style="left:2707px;top:1416px;width:258px;height:74px;line-height:69px;padding-right:4px">Stop</div>
<div class="gb" style="left:2022px;top:1571px;width:2524px;height:167px;"></div>
<span class="t" style="left:2040px;top:1555.7px;font-size:37px;color:#000;background:#f9f9f9;padding:0 8px 0 7px;letter-spacing:-0.08px">Loop</span>
<div class="a" style="left:2049px;top:1627px;width:158px;height:65px;background:#f0f0f0;border:3px solid #f6f6f6;"></div>
<span class="t" style="top:1642.2px;font-size:37px;color:#8a8a8a;right:2387px;">0</span>
<span class="t" style="top:1651.7px;font-size:37px;color:#000;letter-spacing:0.27px;left:2241px;">loop(s)</span>
<div class="a" style="left:2373px;top:1625px;width:157px;height:64px;background:#f0f0f0;border:3px solid #f6f6f6;"></div>
<span class="t" style="top:1638.7px;font-size:37px;color:#8a8a8a;right:2064px;">0</span>
<span class="t" style="top:1656.7px;font-size:37px;color:#000;letter-spacing:2.18px;left:2552px;">(°)</span>
<div class="btn" style="left:2615px;top:1622px;width:257px;height:75px;line-height:70px;padding-right:4px">Update</div>
<div class="btn" style="left:2890px;top:1622px;width:257px;height:75px;line-height:70px;padding-right:4px">Reset Loop</div>
<div class="a" style="left:1480px;top:376px;width:137px;height:137px;border:10px solid #ff0909;"></div>
<div class="a" style="left:2684px;top:368px;width:514px;height:109px;border:10px solid #ff0909;"></div>
<div class="a" style="left:1981px;top:1273px;width:1088px;height:254px;border:10px solid #ff0909;"></div>
<svg class="a" style="left:1590px;top:500px;" width="120" height="240" viewBox="0 0 120 240"><path d="M93 220 L38.5 50" stroke="#ff0909" stroke-width="5" fill="none"/><path d="M30.6 25 L50.6 44.5 L26 52.6 Z" fill="#ff0909"/></svg>
<span class="t" style="top:731.7px;font-size:76px;color:#ff0909;font-weight:700;letter-spacing:0.9px;left:1408px;">Control Mode</span>
</div></div>
</body></html>
